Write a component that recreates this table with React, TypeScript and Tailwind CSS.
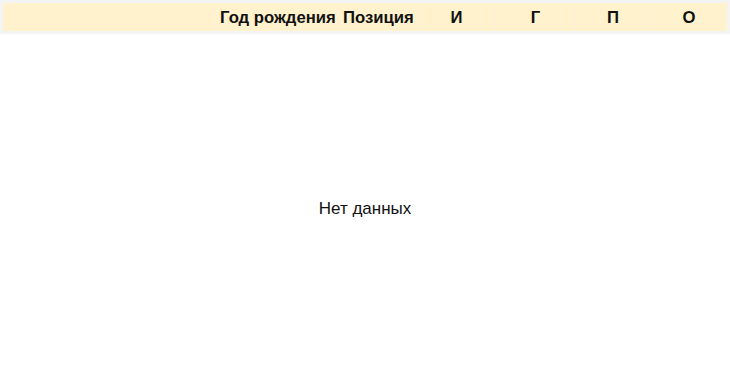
const columns = [
    { label: "", width: "w-[212px]", align: "text-right" },
    { label: "Год рождения", width: "w-[123px]", align: "text-right" },
    { label: "Позиция", width: "w-[79px]", align: "text-right" },
    { label: "И", width: "w-[78px]", align: "text-center" },
    { label: "Г", width: "w-[80px]", align: "text-center" },
    { label: "П", width: "w-[75px]", align: "text-center" },
    { label: "О", width: "flex-1", align: "text-center" },
];

export default function App() {
    return (
        <div className="w-[730px] h-[382px] bg-white font-['Liberation_Sans',Arial,sans-serif] text-[#111]">
            <div className="h-[34px] p-[3px] bg-[#f4f4f4]">
                <div className="flex h-[28px] bg-[#fff2cc]">
                    {columns.map((col, i) => (
                        <div
                            key={i}
                            className={`${col.width} shrink-0 ${col.align} ${i > 0 ? "border-l border-[#fbf0d8]" : ""} px-1 text-[16.7px] font-bold leading-[29px] whitespace-nowrap`}
                        >
                            {col.label}
                        </div>
                    ))}
                </div>
            </div>
            <div className="h-[348px] flex items-center justify-center">
                <p className="text-[17px] leading-none">Нет данных</p>
            </div>
        </div>
    );
}
